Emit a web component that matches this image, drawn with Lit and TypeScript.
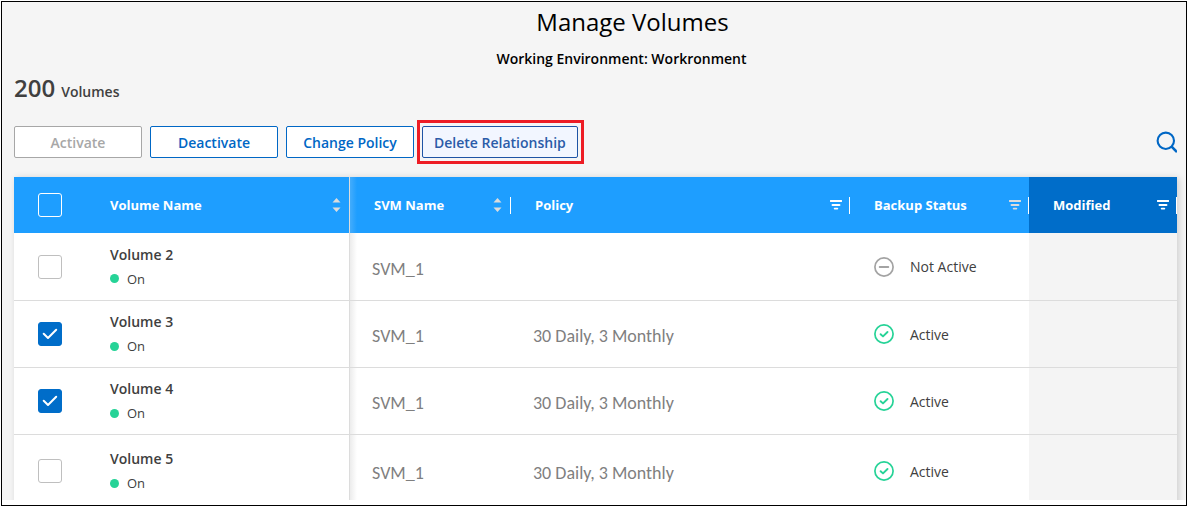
import { LitElement, html, css, svg, nothing } from "lit";
import { customElement, state } from "lit/decorators.js";
import { classMap } from "lit/directives/class-map.js";

interface Volume {
  name: string;
  svm: string;
  policy: string;
  active: boolean;
  selected: boolean;
}

const sortIcon = html`<svg width="12" height="16" viewBox="0 0 12 16" aria-hidden="true">
  ${svg`<path d="M6.5 1 10.5 5.6H2.5ZM6.5 15 2.5 10.4H10.5Z" fill="currentColor" />`}
</svg>`;

const filterIcon = html`<svg width="12" height="12" viewBox="0 0 12 12" aria-hidden="true">
  ${svg`<path d="M.5 2H11.5M2.5 6H9.5M4.7 9.6H7.3" stroke="currentColor" stroke-width="1.9" stroke-linecap="round" fill="none" />`}
</svg>`;

const searchIcon = html`<svg width="22" height="22" viewBox="0 0 22 22" aria-hidden="true">
  ${svg`<circle cx="10.8" cy="9.8" r="8.2" fill="none" stroke="currentColor" stroke-width="2.1" />
  <path d="M16.4 15.4 22 21" stroke="currentColor" stroke-width="2.6" fill="none" />`}
</svg>`;

const activeIcon = html`<svg class="active" width="20" height="20" viewBox="0 0 20 20" aria-hidden="true">
  ${svg`<circle cx="10" cy="10" r="9.1" fill="none" stroke="currentColor" stroke-width="1.7" />
  <path d="M6.6 10.2 9 12.4 13.5 8" fill="none" stroke="currentColor" stroke-width="1.9" stroke-linecap="round" stroke-linejoin="round" />`}
</svg>`;

const inactiveIcon = html`<svg class="inactive" width="20" height="20" viewBox="0 0 20 20" aria-hidden="true">
  ${svg`<circle cx="10" cy="10" r="9.1" fill="none" stroke="currentColor" stroke-width="1.7" />
  <path d="M5.7 10H14.3" stroke="currentColor" stroke-width="1.9" stroke-linecap="round" />`}
</svg>`;

@customElement("app-root")
export class AppRoot extends LitElement {
  @state() private volumes: Volume[] = [
    { name: "Volume 2", svm: "SVM_1", policy: "", active: false, selected: false },
    { name: "Volume 3", svm: "SVM_1", policy: "30 Daily, 3 Monthly", active: true, selected: true },
    { name: "Volume 4", svm: "SVM_1", policy: "30 Daily, 3 Monthly", active: true, selected: true },
    { name: "Volume 5", svm: "SVM_1", policy: "30 Daily, 3 Monthly", active: true, selected: false },
  ];

  static styles = css`
    :host {
      display: block;
      box-sizing: border-box;
      height: 100vh;
      padding: 1px;
      background: #fff;
      font-family: "Open Sans", sans-serif;
      font-size: 14px;
      color: #404040;
    }
    * {
      box-sizing: border-box;
    }
    .frame {
      height: 100%;
      border: 1px solid #000;
      padding-bottom: 5px;
    }
    .page {
      height: 100%;
      overflow: hidden;
      padding: 0 9px 0 12px;
      background: #f5f5f5;
    }
    .heading {
      padding-left: 52px;
      text-align: center;
      color: #000;
    }
    .title {
      margin: 0;
      padding-left: 22px;
      font-size: 24px;
      font-weight: 400;
      line-height: 40px;
    }
    .subtitle {
      margin: 0;
      font-weight: 600;
      line-height: 34px;
    }
    .count {
      display: flex;
      align-items: baseline;
      gap: 6px;
      margin: 0;
      font-weight: 600;
      line-height: 24px;
    }
    .number {
      font-size: 24px;
    }
    .toolbar {
      display: flex;
      align-items: center;
      gap: 8px;
      margin: 22px 0 19px;
    }
    button {
      font: inherit;
      cursor: pointer;
    }
    .action {
      min-width: 128px;
      height: 32px;
      padding: 0 11px;
      border: 1px solid #0067c5;
      border-radius: 2px;
      background: #fff;
      color: #0067c5;
      font-weight: 600;
    }
    .action:disabled {
      border-color: #a7a7a7;
      color: #a7a7a7;
      cursor: default;
    }
    .highlight {
      position: relative;
      border-color: #1e54a5;
      background: #f2f6ff;
      color: #2a5ba8;
    }
    .highlight::after {
      content: "";
      position: absolute;
      inset: -7px -7px -7px -6px;
      border: 3px solid #ed1c24;
      pointer-events: none;
    }
    .icon-button {
      display: flex;
      padding: 0;
      border: 0;
      background: none;
      color: #dcdcdc;
    }
    .search {
      margin-left: auto;
      color: #0067c5;
    }
    .bright {
      color: #fff;
    }
    .table {
      width: 100%;
      table-layout: fixed;
      border-spacing: 0;
      background: #fff;
      box-shadow: 2px 1px 7px rgba(0, 0, 0, 0.16);
    }
    .col-check { width: 72px; }
    .col-name { width: 264px; }
    .col-svm { width: 161px; }
    .col-status { width: 179px; }
    .col-modified { width: 148px; }
    th {
      height: 56px;
      padding: 0 0 0 24px;
      background: #1e9eff;
      color: #fff;
      font-size: 13px;
      font-weight: 700;
      text-align: left;
    }
    .th {
      display: flex;
      align-items: center;
      justify-content: space-between;
      height: 17px;
      padding-right: 7px;
      border-right: 1px solid #fff;
    }
    .pinned {
      border-right: 1px solid #dcdcdc;
    }
    .pinned .th {
      border-right: 0;
    }
    th.svm {
      background: linear-gradient(to right, #44acfb, #1e9eff 7px);
    }
    th.modified {
      background: #006dc9;
    }
    td {
      height: 67px;
      padding: 0 0 0 24px;
      border-bottom: 1px solid #dcdcdc;
    }
    tr:first-child td {
      height: 68px;
    }
    tr:last-child td {
      height: 73px;
    }
    td.detail {
      padding: 4px 0 0 22px;
      color: #7f7f7f;
      font-family: Carlito, Lato, sans-serif;
      font-size: 18px;
    }
    td.svm {
      background: linear-gradient(to right, #ececec, #fff 7px);
    }
    td.modified {
      background: #f4f4f4;
    }
    .check {
      display: grid;
      width: 24px;
      height: 24px;
    }
    .check > * {
      grid-area: 1 / 1;
    }
    .check svg {
      z-index: 1;
      pointer-events: none;
    }
    .box {
      appearance: none;
      width: 24px;
      height: 24px;
      margin: 0;
      border: 1px solid #bfbfbf;
      border-radius: 3px;
      background: #fff;
    }
    .box:checked {
      border-color: #006dc9;
      background: #006dc9;
    }
    .box.all {
      border-color: #fff;
      background: transparent;
    }
    .name {
      font-weight: 600;
      line-height: 24px;
    }
    .state {
      display: flex;
      align-items: center;
      gap: 8px;
      font-size: 13px;
      line-height: 24px;
    }
    .dot {
      width: 9px;
      height: 9px;
      border-radius: 50%;
      background: #26d397;
    }
    .status {
      display: flex;
      align-items: center;
      gap: 16px;
    }
    .active { color: #26d397; }
    .inactive { color: #a3a3a3; }
  `;

  private toggle(index: number) {
    this.volumes = this.volumes.map((v, i) => (i === index ? { ...v, selected: !v.selected } : v));
  }

  private toggleAll(e: Event) {
    const selected = (e.target as HTMLInputElement).checked;
    this.volumes = this.volumes.map((v) => ({ ...v, selected }));
  }

  private header(label: string, cls: string, icon: unknown, bright = false) {
    return html`<th scope="col" class=${cls}>
      <div class="th">
        <span>${label}</span>
        <button class=${classMap({ "icon-button": true, bright })} aria-label=${`${label} options`}>${icon}</button>
      </div>
    </th>`;
  }

  private row(v: Volume, i: number) {
    return html`<tr>
      <td>
        <label class="check">
          <input class="box" type="checkbox" aria-label=${`Select ${v.name}`} .checked=${v.selected} @change=${() => this.toggle(i)} />
          ${v.selected
            ? html`<svg width="24" height="24" viewBox="0 0 24 24" aria-hidden="true">
                ${svg`<path d="M5.7 11.8 10 16 18.2 7.8" fill="none" stroke="#fff" stroke-width="2" stroke-linecap="round" stroke-linejoin="round" />`}
              </svg>`
            : nothing}
        </label>
      </td>
      <td class="pinned">
        <div class="name">${v.name}</div>
        <div class="state"><span class="dot"></span>On</div>
      </td>
      <td class="detail svm">${v.svm}</td>
      <td class="detail">${v.policy}</td>
      <td>
        <div class="status">${v.active ? activeIcon : inactiveIcon}<span>${v.active ? "Active" : "Not Active"}</span></div>
      </td>
      <td class="modified"></td>
    </tr>`;
  }

  render() {
    return html`<div class="frame">
      <main class="page">
        <header class="heading">
          <h1 class="title">Manage Volumes</h1>
          <p class="subtitle">Working Environment: Workronment</p>
        </header>
        <p class="count"><span class="number">200</span><span>Volumes</span></p>
        <div class="toolbar">
          <button class="action" disabled>Activate</button>
          <button class="action">Deactivate</button>
          <button class="action">Change Policy</button>
          <button class="action highlight">Delete Relationship</button>
          <button class="icon-button search" aria-label="Search">${searchIcon}</button>
        </div>
        <table class="table">
          <colgroup>
            <col class="col-check" />
            <col class="col-name" />
            <col class="col-svm" />
            <col />
            <col class="col-status" />
            <col class="col-modified" />
          </colgroup>
          <thead>
            <tr>
              <th scope="col">
                <label class="check">
                  <input class="box all" type="checkbox" aria-label="Select all volumes" @change=${this.toggleAll} />
                </label>
              </th>
              ${this.header("Volume Name", "pinned", sortIcon)}
              ${this.header("SVM Name", "svm", sortIcon)}
              ${this.header("Policy", "", filterIcon, true)}
              ${this.header("Backup Status", "", filterIcon)}
              ${this.header("Modified", "modified", filterIcon, true)}
            </tr>
          </thead>
          <tbody>
            ${this.volumes.map((v, i) => this.row(v, i))}
          </tbody>
        </table>
      </main>
    </div>`;
  }
}
